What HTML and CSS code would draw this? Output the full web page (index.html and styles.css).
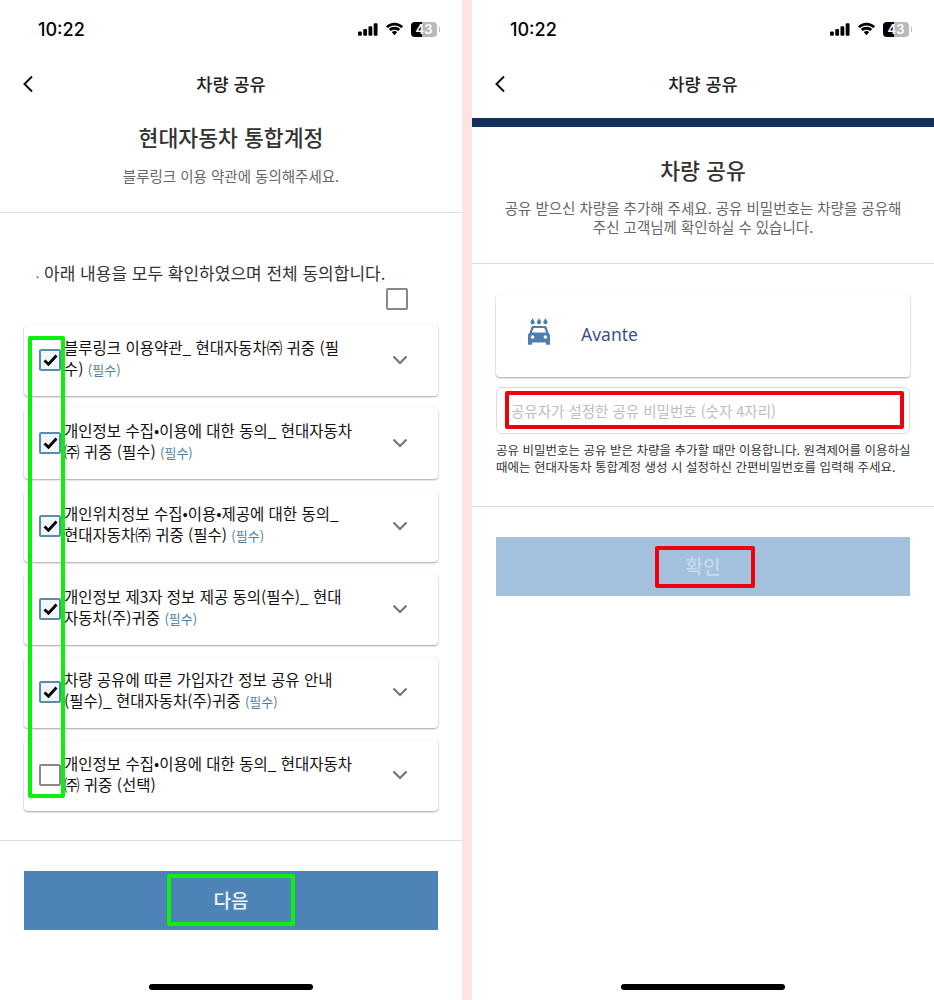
FILE: index.html
```html
<!DOCTYPE html>
<html lang="ko">
<head>
  <meta charset="UTF-8">
  <meta name="viewport" content="width=device-width, initial-scale=1.0">
  <title>차량 공유</title>
  <link rel="stylesheet" href="styles.css">
</head>
<body>
  <svg class="icon-defs" width="0" height="0">
    <symbol id="signal" viewBox="0 0 21 13"><rect x="0" y="8.500" width="4" height="4.500" rx="1"/><rect x="5.500" y="6" width="4" height="7" rx="1"/><rect x="11" y="3" width="4" height="10" rx="1"/><rect x="16.500" y="0" width="4" height="13" rx="1"/></symbol>
    <symbol id="wifi" viewBox="0 0 20 14"><path d="M10 3.400c2.700 0 5.100 1 7 2.800l2-2.200C16.600 1.700 13.500 .4 10 .4S3.400 1.700 1 4l2 2.200c1.900-1.800 4.300-2.800 7-2.800z"/><path d="M10 7.700c1.500 0 2.900 .6 4 1.500l2-2.200C14.400 5.600 12.300 4.700 10 4.700S5.600 5.600 4 7l2 2.200c1.100-.9 2.500-1.500 4-1.500z"/><path d="M10 9.200c-1.100 0-2.100 .4-2.800 1.100L10 13.500l2.800-3.200c-.7-.7-1.700-1.100-2.800-1.100z"/></symbol>
    <symbol id="chevron" viewBox="0 0 16 10"><path d="M1.500 1.500 8 8l6.500-6.500" fill="none" stroke="#757575" stroke-width="2.200"/></symbol>
    <symbol id="check" viewBox="0 0 15 12"><path d="M1.500 6.500 5.500 10.300 13.500 1.500" fill="none" stroke="#000" stroke-width="2.800"/></symbol>
  </svg>

  <section class="phone">
    <div class="status">
      <span class="time">10:22</span>
      <span class="status-icons">
        <svg class="i-signal"><use href="#signal"/></svg>
        <svg class="i-wifi"><use href="#wifi"/></svg>
        <span class="battery"><span class="battery-level"></span><span class="battery-num">43</span></span>
        <span class="battery-nub"></span>
      </span>
    </div>
    <div class="topbar">
      <svg class="back" viewBox="0 0 12 18"><path d="M10 1.500 2.500 9l7.500 7.500" fill="none" stroke="#111" stroke-width="2"/></svg>
      <div class="topbar-title">차량 공유</div>
    </div>

    <div class="intro intro-terms">
      <h1>현대자동차 통합계정</h1>
      <p>블루링크 이용 약관에 동의해주세요.</p>
    </div>

    <div class="agree-all">
      <p><span class="dot">•</span>아래 내용을 모두 확인하였으며 전체 동의합니다.</p>
      <span class="box box-all"></span>
    </div>

    <div class="terms">
      <div class="term">
        <span class="box on"><svg><use href="#check"/></svg></span>
        <div class="term-text">블루링크 이용약관_ 현대자동차㈜ 귀중 (필<br>수) <span class="req">(필수)</span></div>
        <svg class="chev"><use href="#chevron"/></svg>
      </div>
      <div class="term">
        <span class="box on"><svg><use href="#check"/></svg></span>
        <div class="term-text">개인정보 수집•이용에 대한 동의_ 현대자동차<br>㈜ 귀중 (필수) <span class="req">(필수)</span></div>
        <svg class="chev"><use href="#chevron"/></svg>
      </div>
      <div class="term">
        <span class="box on"><svg><use href="#check"/></svg></span>
        <div class="term-text">개인위치정보 수집•이용•제공에 대한 동의_<br>현대자동차㈜ 귀중 (필수) <span class="req">(필수)</span></div>
        <svg class="chev"><use href="#chevron"/></svg>
      </div>
      <div class="term">
        <span class="box on"><svg><use href="#check"/></svg></span>
        <div class="term-text">개인정보 제3자 정보 제공 동의(필수)_ 현대<br>자동차(주)귀중 <span class="req">(필수)</span></div>
        <svg class="chev"><use href="#chevron"/></svg>
      </div>
      <div class="term">
        <span class="box on"><svg><use href="#check"/></svg></span>
        <div class="term-text">차량 공유에 따른 가입자간 정보 공유 안내<br>(필수)_ 현대자동차(주)귀중 <span class="req">(필수)</span></div>
        <svg class="chev"><use href="#chevron"/></svg>
      </div>
      <div class="term">
        <span class="box"></span>
        <div class="term-text">개인정보 수집•이용에 대한 동의_ 현대자동차<br>㈜ 귀중 (선택)</div>
        <svg class="chev"><use href="#chevron"/></svg>
      </div>
    </div>

    <div class="footer footer-terms">
      <button class="btn">다음</button>
    </div>
    <div class="home-bar"></div>

    <div class="mark mark-green mark-checks"></div>
    <div class="mark mark-green mark-next"></div>
  </section>

  <section class="phone">
    <div class="status">
      <span class="time">10:22</span>
      <span class="status-icons">
        <svg class="i-signal"><use href="#signal"/></svg>
        <svg class="i-wifi"><use href="#wifi"/></svg>
        <span class="battery"><span class="battery-level"></span><span class="battery-num">43</span></span>
        <span class="battery-nub"></span>
      </span>
    </div>
    <div class="topbar">
      <svg class="back" viewBox="0 0 12 18"><path d="M10 1.500 2.500 9l7.500 7.500" fill="none" stroke="#111" stroke-width="2"/></svg>
      <div class="topbar-title">차량 공유</div>
    </div>
    <div class="navy-bar"></div>

    <div class="intro intro-share">
      <h1>차량 공유</h1>
      <p>공유 받으신 차량을 추가해 주세요. 공유 비밀번호는 차량을 공유해<br>주신 고객님께 확인하실 수 있습니다.</p>
    </div>

    <div class="share-form">
      <div class="car-card">
        <svg class="car" viewBox="0 0 24 29">
          <path d="M5 0l2 3.200a2.300 2.300 0 1 1-4 0z"/><path d="M12 0l2 3.200a2.300 2.300 0 1 1-4 0z"/><path d="M19 0l2 3.200a2.300 2.300 0 1 1-4 0z"/>
          <path fill-rule="evenodd" d="M5.500 8.500h13c.8 0 1.500 .5 1.800 1.300L22.500 16c.9 .6 1.500 1.600 1.500 2.700V28c0 .6-.4 1-1 1h-2.500c-.6 0-1-.4-1-1v-1.500h-15V28c0 .6-.4 1-1 1H1c-.6 0-1-.4-1-1v-9.300c0-1.100 .6-2.100 1.500-2.700l2.200-6.200c.3-.8 1-1.300 1.800-1.300zM6.200 10.800 4.300 15.700h15.400l-1.900-4.900zM5 18.500a2 2 0 1 0 0 4 2 2 0 0 0 0-4zm14 0a2 2 0 1 0 0 4 2 2 0 0 0 0-4z"/>
        </svg>
        <span class="car-name">Avante</span>
      </div>
      <div class="pw-field">공유자가 설정한 공유 비밀번호 (숫자 4자리)</div>
      <p class="pw-help">공유 비밀번호는 공유 받은 차량을 추가할 때만 이용합니다. 원격제어를 이용하실<br>때에는 현대자동차 통합계정 생성 시 설정하신 간편비밀번호를 입력해 주세요.</p>
    </div>

    <div class="footer footer-share">
      <button class="btn btn-off">확인</button>
    </div>
    <div class="home-bar"></div>

    <div class="mark mark-red mark-pw"></div>
    <div class="mark mark-red mark-ok"></div>
  </section>
</body>
</html>
```

FILE: styles.css
```css
* {
  box-sizing: border-box;
}
html, body {
  margin: 0;
  padding: 0;
  height: 100%;
}
body {
  display: flex;
  justify-content: space-between;
  width: 934px;
  height: 1000px;
  overflow: hidden;
  background: #fde3e1;
  font-family: "Noto Sans CJK KR", "Noto Sans", sans-serif;
  color: #222;
}
.icon-defs {
  position: absolute;
}
.phone {
  position: relative;
  display: flex;
  flex-direction: column;
  width: 462px;
  height: 1000px;
  background: #fff;
}

/* status bar */
.status {
  display: flex;
  align-items: center;
  justify-content: space-between;
  height: 58px;
  padding: 0 22px 0 38px;
}
.time {
  font-family: Inter, sans-serif;
  font-size: 18px;
  font-weight: 500;
  color: #000;
}
.status-icons {
  display: flex;
  align-items: center;
  gap: 7px;
}
.i-signal {
  width: 20px;
  height: 13px;
}
.i-wifi {
  width: 19px;
  height: 14px;
}
.battery {
  position: relative;
  display: block;
  width: 26px;
  height: 15px;
  border-radius: 4px;
  overflow: hidden;
  background: #b9b9b9;
}
.battery-level {
  display: block;
  width: 11px;
  height: 15px;
  background: #000;
}
.battery-num {
  position: absolute;
  top: 0;
  left: 0;
  width: 100%;
  font-family: Inter, sans-serif;
  font-size: 13px;
  font-weight: 600;
  line-height: 15px;
  text-align: center;
  color: #fff;
}
.battery-nub {
  width: 1px;
  height: 5px;
  margin-left: -5px;
  background: #b9b9b9;
}

/* top bar */
.topbar {
  position: relative;
  display: flex;
  align-items: center;
  justify-content: center;
  height: 52px;
}
.back {
  position: absolute;
  left: 22px;
  top: 17px;
  width: 12px;
  height: 18px;
}
.topbar-title {
  margin-bottom: 2px;
  font-size: 17.500px;
  font-weight: 500;
  color: #222;
}
.navy-bar {
  height: 9px;
  margin-top: 8px;
  background: #12305c;
}

/* heading blocks */
.intro {
  text-align: center;
  border-bottom: 1px solid #dedede;
}
.intro h1 {
  margin: 0;
  font-size: 21.600px;
  font-weight: 500;
  line-height: 30px;
  color: #333;
}
.intro p {
  margin: 0;
  font-size: 14.500px;
  line-height: 19px;
  color: #666;
}
.intro-terms {
  height: 103px;
  padding-top: 12px;
}
.intro-terms p {
  margin-top: 14px;
}
.intro-share {
  height: 137px;
  padding-top: 28px;
}
.intro-share p {
  margin-top: 13px;
  white-space: nowrap;
}

/* agree all row */
.agree-all {
  position: relative;
  height: 112px;
  padding: 48px 0 0 36px;
}
.agree-all p {
  margin: 0;
  font-size: 17px;
  line-height: 24px;
  white-space: nowrap;
  color: #333;
}
.dot {
  margin-right: 5px;
  font-size: 9px;
  color: #999;
}
.box {
  display: flex;
  align-items: center;
  justify-content: center;
  flex: none;
  width: 22px;
  height: 22px;
  border: 2.500px solid #888;
  border-radius: 2px;
  background: #fff;
}
.box.on {
  border-color: #5b8cb0;
  background: #f2f6f9;
}
.box svg {
  width: 15px;
  height: 12px;
}
.box-all {
  position: absolute;
  left: 386px;
  top: 75px;
}

/* terms list */
.terms {
  display: flex;
  flex-direction: column;
  gap: 12px;
  padding: 0 24px;
}
.term {
  display: flex;
  align-items: center;
  height: 71px;
  padding: 0 30px 2px 15px;
  border-radius: 4px;
  background: #fff;
  box-shadow: 0 1px 2px rgba(0, 0, 0, 0.35), 0 0 2px rgba(0, 0, 0, 0.06);
}
.term-text {
  flex: 1;
  margin-left: 3px;
  padding-bottom: 2px;
  font-size: 15.500px;
  line-height: 21px;
  white-space: nowrap;
  color: #111;
}
.req {
  font-size: 13px;
  color: #4f7fa8;
}
.chev {
  flex: none;
  width: 16px;
  height: 10px;
}

/* bottom buttons */
.footer {
  border-top: 1px solid #dedede;
  padding: 30px 24px 0;
}
.footer-terms {
  margin-top: 29px;
}
.btn {
  display: block;
  width: 100%;
  height: 59px;
  padding: 0 0 3px;
  border: none;
  background: #4c84b7;
  font-family: inherit;
  font-size: 19px;
  font-weight: 500;
  color: #eef5fa;
}
.btn-off {
  background: #a3c1dc;
  color: #c6d9ea;
}
.home-bar {
  position: absolute;
  left: 149px;
  bottom: 10px;
  width: 164px;
  height: 6px;
  border-radius: 3px;
  background: #000;
}

/* vehicle sharing form */
.share-form {
  height: 242px;
  padding: 30px 24px 0;
}
.car-card {
  display: flex;
  align-items: center;
  height: 83px;
  padding: 0 0 4px 32px;
  border-radius: 4px;
  background: #fff;
  box-shadow: 0 1px 2px rgba(0, 0, 0, 0.35), 0 0 2px rgba(0, 0, 0, 0.06);
}
.car {
  width: 22px;
  height: 27px;
  margin-bottom: 4px;
  fill: #4c7fae;
}
.car-name {
  margin-left: 31px;
  font-family: "Noto Sans", sans-serif;
  font-size: 17.500px;
  color: #3f4f90;
}
.pw-field {
  height: 47px;
  margin-top: 10px;
  padding-left: 14px;
  border: 1px solid #dcdcdc;
  border-radius: 6px;
  font-size: 14.500px;
  line-height: 45px;
  color: #bdbdbd;
}
.pw-help {
  margin: 7px 0 0;
  font-size: 12.500px;
  line-height: 17px;
  white-space: nowrap;
  color: #333;
}

/* annotation boxes */
.mark {
  position: absolute;
  border-radius: 2px;
}
.mark-green {
  border: 4px solid #0cf00c;
}
.mark-red {
  border: 4px solid #f0000c;
}
.mark-checks {
  left: 28px;
  top: 336px;
  width: 37px;
  height: 462px;
}
.mark-next {
  left: 167px;
  top: 874px;
  width: 128px;
  height: 52px;
}
.mark-pw {
  left: 33px;
  top: 391px;
  width: 399px;
  height: 38px;
}
.mark-ok {
  left: 183px;
  top: 546px;
  width: 100px;
  height: 42px;
}
```
